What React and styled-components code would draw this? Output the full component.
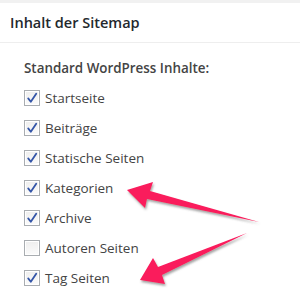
import React from "react";
import styled, { createGlobalStyle } from "styled-components";

const GlobalStyle = createGlobalStyle`
  html, body {
    margin: 0;
    padding: 0;
    background: #f1f1f1;
    width: 300px;
    height: 300px;
    overflow: hidden;
  }
`;

const Page = styled.div`
  position: relative;
  width: 300px;
  height: 300px;
  padding-top: 3px;
  box-sizing: border-box;
  font-family: "Open Sans", "Noto Sans", sans-serif;
`;

const Panel = styled.section`
  background: #fff;
  height: 297px;
`;

const Header = styled.h2`
  margin: 0;
  height: 40px;
  box-sizing: border-box;
  padding: 0 10px;
  display: flex;
  align-items: center;
  font-size: 14.5px;
  font-weight: 600;
  color: #23282d;
  border-bottom: 1px solid #eeeeee;
`;

const Body = styled.div`
  padding: 15px 24px 0;
`;

const SubTitle = styled.h4`
  margin: 0 0 11px;
  font-size: 13.4px;
  line-height: 20px;
  font-weight: 600;
  color: #444;
`;

const List = styled.ul`
  list-style: none;
  margin: 0;
  padding: 0;
  display: flex;
  flex-direction: column;
  gap: 12px;
`;

const Row = styled.li`
  display: flex;
  align-items: center;
  gap: 5px;
  height: 18px;
  font-size: 13.5px;
  color: #444;
`;

const Box = styled.span`
  width: 16px;
  height: 16px;
  box-sizing: border-box;
  border: 1px solid #a9adb1;
  background: linear-gradient(#eeeeee, #fbfbfb);
  box-shadow: inset 0 0 0 1px #fff;
  display: flex;
  align-items: center;
  justify-content: center;
`;

const Overlay = styled.svg`
  position: absolute;
  left: 0;
  top: 0;
  pointer-events: none;
`;

const items = [
  ["Startseite", true],
  ["Beiträge", true],
  ["Statische Seiten", true],
  ["Kategorien", true],
  ["Archive", true],
  ["Autoren Seiten", false],
  ["Tag Seiten", true],
];

function Check() {
  return (
    <svg width="12" height="12" viewBox="0 0 12 12">
      <path d="M2.2 6.4 L4.8 9.8 L10.2 1.8" fill="none" stroke="#3355a8" strokeWidth="1.8" strokeLinecap="round" strokeLinejoin="round" />
    </svg>
  );
}

export default function App() {
  return (
    <Page>
      <GlobalStyle />
      <Panel>
        <Header>Inhalt der Sitemap</Header>
        <Body>
          <SubTitle>Standard WordPress Inhalte:</SubTitle>
          <List>
            {items.map(([label, on]) => (
              <Row key={label}>
                <Box>{on && <Check />}</Box>
                {label}
              </Row>
            ))}
          </List>
        </Body>
      </Panel>
      {/* the red arrows lie on top of the screenshot */}
      <Overlay width="300" height="300" viewBox="0 0 300 300">
        <defs>
          <filter id="sh" x="-20%" y="-40%" width="140%" height="180%">
            <feDropShadow dx="1" dy="2" stdDeviation="1.2" floodColor="#555" floodOpacity="0.55" />
          </filter>
        </defs>
        <g fill="#fa1a5c" filter="url(#sh)">
          <polygon points="127,190 153,182 150,191 259,222 147,199 145,208" />
          <polygon points="140,280 153,258 158,267 247,233 162,275 165,284" />
        </g>
      </Overlay>
    </Page>
  );
}
